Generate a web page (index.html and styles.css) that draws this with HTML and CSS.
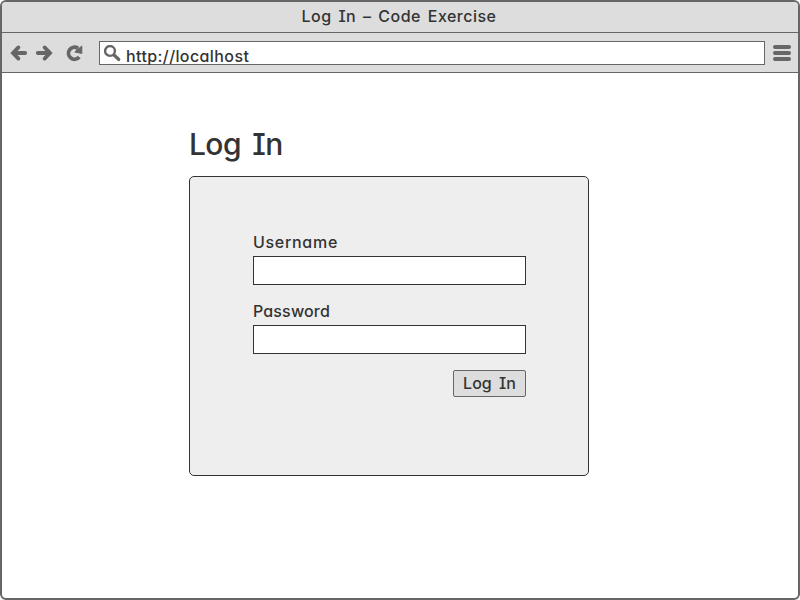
FILE: index.html
```html
<!DOCTYPE html>
<html lang="en">
<head>
<meta charset="utf-8">
<title>Log In – Code Exercise</title>
<link rel="stylesheet" href="styles.css">
</head>
<body>
<div class="window">
  <header class="titlebar"><span class="title">Log In – Code Exercise</span></header>
  <nav class="toolbar">
    <svg class="nav-icons" width="80" height="24" viewBox="0 0 80 24">
      <g fill="none" stroke="#666" stroke-width="3.8" stroke-linecap="round">
        <path d="M4 12H15.2M8.4 6.4L3 12L8.4 17.6"/>
        <path d="M27.8 12H39M34.6 6.4L40 12L34.6 17.6"/>
        <path d="M69.2 16A6 6 0 1 1 68 7.4" stroke-linecap="butt"/>
      </g>
      <path d="M71.8 5V12.4L64.8 11Z" fill="#666" stroke="#666" stroke-linejoin="round"/>
    </svg>
    <div class="address">
      <svg class="search" width="18" height="18" viewBox="0 0 18 18" fill="none" stroke="#666">
        <circle cx="6" cy="6" r="4.9" stroke-width="2.4"/>
        <path d="M10 10L14.8 14.5" stroke-width="3.2" stroke-linecap="round"/>
      </svg>
      <span class="url">http://localhost</span>
    </div>
    <svg class="menu" width="18" height="18" viewBox="0 0 18 18" stroke="#666" stroke-width="4" stroke-linecap="round">
      <path d="M2 3H16M2 9H16M2 15H16"/>
    </svg>
  </nav>
  <main class="page">
    <h1 class="heading">Log In</h1>
    <form class="panel">
      <label class="label user" for="username">Username</label>
      <input class="field" id="username" type="text">
      <label class="label pass" for="password">Password</label>
      <input class="field" id="password" type="password">
      <button class="submit" type="button">Log In</button>
    </form>
  </main>
</div>
</body>
</html>
```
FILE: styles.css
```css
* {
  box-sizing: border-box;
}

body {
  margin: 0;
  background: #fff;
  color: #333;
  font: 500 16px/20px Inter, "Open Sans", sans-serif;
  font-feature-settings: "cv11", "cv08";
}

.window {
  height: 600px;
  border: 2px solid #666;
  border-radius: 6px;
  overflow: hidden;
}

.titlebar {
  height: 31px;
  padding-top: 4px;
  border-bottom: 1px solid #666;
  background: #ddd;
  text-align: center;
}

.title {
  margin-right: 2px;
  letter-spacing: 0.5px;
  word-spacing: 2px;
}

.toolbar {
  display: flex;
  align-items: center;
  height: 40px;
  padding: 0 7px 0 8px;
  border-bottom: 1px solid #666;
  background: #ddd;
}

.nav-icons {
  flex: none;
  margin-right: 9px;
}

.address {
  display: flex;
  flex: 1;
  height: 24px;
  margin-top: 1px;
  padding-left: 4px;
  border: 1px solid #666;
  background: #fff;
}

.search {
  margin-top: 3px;
}

.url {
  margin: 4px 0 0 4px;
  letter-spacing: 0.4px;
}

.menu {
  flex: none;
  margin: 1px 0 0 8px;
}

.page {
  width: 400px;
  margin: 51px 0 0 187px;
}

.heading {
  height: 52px;
  margin: 0;
  font-size: 30px;
  font-weight: 500;
  line-height: 40px;
  letter-spacing: -0.6px;
  word-spacing: 4px;
}

.panel {
  display: flex;
  flex-direction: column;
  height: 300px;
  padding: 55px 62px 0 63px;
  border: 1px solid #333;
  border-radius: 5px;
  background: #eee;
}

.label {
  height: 24px;
}

.user {
  letter-spacing: 0.7px;
}

.pass {
  letter-spacing: 0.15px;
}

.field {
  width: 273px;
  height: 29px;
  margin: 0 0 16px;
  border: 1px solid #333;
  background: #fff;
  font: inherit;
}

.submit {
  align-self: flex-end;
  width: 73px;
  height: 27px;
  padding: 0 0 2px;
  border: 1px solid #666;
  border-radius: 2px;
  background: #ddd;
  color: #333;
  font: inherit;
  font-feature-settings: inherit;
  word-spacing: 3px;
}
```
